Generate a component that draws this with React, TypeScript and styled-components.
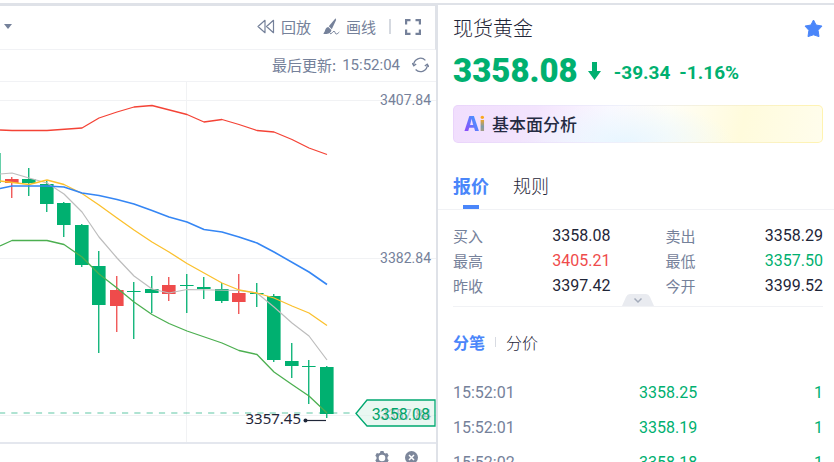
import React from "react";
import styled, { createGlobalStyle } from "styled-components";

const color = {
  green: "#00b070",
  red: "#ef4b4b",
  blue: "#4a86fa",
  ink: "#1f2638",
  muted: "#75819a",
  rule: "#f1f2f5",
  frame: "#dfe2e8",
};

const numberFont = `Roboto, "Noto Sans CJK SC", sans-serif`;
const textFont = `"Noto Sans CJK SC", sans-serif`;

const GlobalStyle = createGlobalStyle`
  * { box-sizing: border-box; }
  body { margin: 0; background: #fff; overflow: hidden; }
  button { border: 0; padding: 0; margin: 0; background: none; font: inherit; color: inherit; cursor: pointer; }
  svg { display: block; }
`;

const Page = styled.div`
  display: flex;
  height: 100vh;
  padding-top: 3px;
  font-family: ${textFont};
  color: ${color.ink};
`;

const ChartPanel = styled.main`
  flex: 1;
  min-width: 0;
  display: flex;
  flex-direction: column;
  border-top: 3px solid ${color.frame};
`;

const Toolbar = styled.div`
  height: 44px;
  flex: none;
  display: flex;
  align-items: center;
  padding: 0 14px 2px 4px;
  border-bottom: 1px solid ${color.rule};
  border-right: 1px solid ${color.frame};
  color: ${color.muted};
`;

const Spacer = styled.div`
  flex: 1;
`;

const ToolButton = styled.button<{ $gap?: number }>`
  display: flex;
  align-items: center;
  gap: 6px;
  margin-right: ${(p) => p.$gap ?? 0}px;
  font-size: 15px;
  line-height: 20px;
  font-weight: 400;
`;

const ToolDivider = styled.span`
  width: 2px;
  height: 15px;
  margin-right: 14px;
  background: #d5d9e0;
`;

const StatusRow = styled.div`
  height: 32px;
  flex: none;
  display: flex;
  align-items: center;
  justify-content: flex-end;
  padding: 0 7px 2px 0;
  border-bottom: 1px solid ${color.rule};
  font-size: 15px;
  line-height: 20px;
  font-weight: 400;
  color: ${color.muted};
`;

const StatusTime = styled.time`
  margin: 0 12px 0 6px;
  font-family: ${numberFont};
  font-size: 15px;
`;

const ChartArea = styled.div`
  height: 360px;
  flex: none;
`;

const IndicatorBar = styled.div`
  flex: 1;
  display: flex;
  justify-content: flex-end;
  align-items: flex-start;
  gap: 16px;
  padding: 7px 18px 0 0;
  border-top: 2px solid #e4e7ee;
  color: #7d879b;
`;

const QuotePanel = styled.aside`
  width: 398px;
  flex: none;
  border-top: 2px solid ${color.frame};
  border-left: 2px solid ${color.frame};
`;

const Header = styled.header`
  padding: 8px 11px 0 15px;
`;

const NameRow = styled.div`
  display: flex;
  align-items: center;
  justify-content: space-between;
  height: 30px;
`;

const Name = styled.h1`
  margin: 0;
  font-size: 20px;
  line-height: 30px;
  font-weight: 300;
`;

const PriceRow = styled.div`
  display: flex;
  align-items: center;
  height: 40px;
  margin-top: 8px;
  color: ${color.green};
  font-family: ${numberFont};
  font-weight: 700;
`;

const Price = styled.strong`
  font-size: 33px;
  line-height: 40px;
`;

const ArrowSlot = styled.span`
  margin: 0 13px 0 10px;
`;

const Change = styled.span`
  margin-right: 9px;
  padding-top: 3px;
  font-size: 19px;
  line-height: 24px;
`;

const AnalysisButton = styled.button`
  display: flex;
  align-items: center;
  width: 100%;
  height: 38px;
  margin-top: 14px;
  padding: 0 10px;
  border: 1px solid transparent;
  border-radius: 5px;
  background:
    radial-gradient(ellipse 110px 40px at 46% 100%, #e8f6ff, #e8f6ff00) padding-box,
    linear-gradient(100deg, #f1defd 0%, #f3e4fd 22%, #fbf9ff 42%, #fffef6 58%, #fffbdc 78%, #fffdec 100%) padding-box,
    linear-gradient(90deg, #ead4fb, #eef0fb 45%, #fff3b0) border-box;
`;

const AiMark = styled.span`
  display: flex;
  width: 28px;
  font-family: Inter, sans-serif;
  font-size: 20px;
  line-height: 24px;
  font-weight: 800;
`;

const MarkLetter = styled.span<{ $fill: string }>`
  background: ${(p) => p.$fill};
  background-clip: text;
  color: transparent;
`;

const AnalysisLabel = styled.span`
  font-size: 17px;
  line-height: 24px;
  font-weight: 500;
  color: #252b42;
`;

const Tabs = styled.div`
  display: flex;
  gap: 24px;
  height: 41px;
  margin-top: 26px;
  padding-left: 15px;
  border-bottom: 1px solid ${color.rule};
`;

const Tab = styled.button<{ $active?: boolean }>`
  display: flex;
  flex-direction: column;
  align-items: center;
  justify-content: space-between;
  font-size: 18px;
  line-height: 32px;
  font-weight: ${(p) => (p.$active ? 700 : 300)};
  color: ${(p) => (p.$active ? color.blue : color.ink)};
  &::after {
    content: "";
    width: 16px;
    height: 4px;
    background: ${(p) => (p.$active ? color.blue : "transparent")};
  }
`;

const Quotes = styled.dl`
  display: grid;
  grid-template-columns: 1fr 1fr;
  column-gap: 55px;
  margin: 0 11px 0 15px;
  padding: 13px 0 8px;
  border-bottom: 1px solid ${color.rule};
`;

const Quote = styled.div`
  display: flex;
  justify-content: space-between;
  line-height: 25px;
`;

const QuoteLabel = styled.dt`
  font-size: 15px;
  font-weight: 400;
  color: ${color.muted};
`;

const QuoteValue = styled.dd<{ $tone: string }>`
  margin: 0;
  font-family: ${numberFont};
  font-size: 16px;
  color: ${(p) => p.$tone};
`;

const CollapseButton = styled.button`
  display: block;
  height: 12px;
  margin: -13px auto 1px 184px;
  position: relative;
`;

const SubTabs = styled.div`
  display: flex;
  align-items: center;
  gap: 10px;
  height: 24px;
  margin: 24px 0 21px 15px;
`;

const SubTab = styled.button<{ $active?: boolean }>`
  font-size: 16px;
  line-height: 24px;
  font-weight: ${(p) => (p.$active ? 700 : 300)};
  color: ${(p) => (p.$active ? color.blue : color.ink)};
`;

const SubDivider = styled.span`
  width: 1px;
  height: 10px;
  background: #d8dbe2;
`;

const TickTable = styled.table`
  width: calc(100% - 26px);
  margin: 0 11px 0 15px;
  border-collapse: collapse;
  table-layout: fixed;
  font-family: ${numberFont};
  font-size: 16px;
`;

const TickCell = styled.td<{ $tone: string; $align: string }>`
  height: 35px;
  padding: 0;
  color: ${(p) => p.$tone};
  text-align: ${(p) => p.$align};
`;

const TickCol = styled.col<{ $share: number }>`
  width: ${(p) => p.$share}%;
`;

type Candle = [x: number, high: number, low: number, top: number, bottom: number, up?: boolean];

const candles: Candle[] = [
  [-6, 153, 183, 153, 183],
  [12, 177, 198, 179, 183, true],
  [29, 168, 196, 179, 183],
  [47, 181, 212, 184, 204],
  [64, 202, 237, 203, 225],
  [82, 224, 267, 225, 265],
  [99, 251, 353, 266, 305],
  [117, 276, 332, 290, 306, true],
  [134, 282, 339, 291, 292],
  [152, 276, 313, 289, 293],
  [169, 277, 301, 285, 294, true],
  [187, 274, 313, 285, 286],
  [204, 277, 299, 287, 289],
  [222, 283, 303, 289, 301],
  [239, 274, 314, 293, 302, true],
  [257, 283, 307, 293, 294],
  [274, 294, 362, 296, 360],
  [292, 343, 378, 361, 366],
  [309, 360, 404, 366, 367],
  [327, 366, 418, 367, 414],
];

const lines = [
  {
    stroke: "#bdbdbd",
    width: 1.2,
    points:
      "0,174 12,173 29,178 47,183 64,194 82,212 99,237 117,258 134,276 152,289 169,293 187,289.5 239,290.5 257,293 274,307 292,323 309,336 327,360",
  },
  {
    stroke: "#fbc02d",
    width: 1.3,
    points:
      "0,181 29,184.5 47,180 64,184.5 82,193.5 99,205 117,218 134,230 152,242 169,252 187,263.5 222,283 239,290 257,293 274,298 292,306 309,313 327,325.5",
  },
  {
    stroke: "#f44336",
    width: 1.3,
    points:
      "0,130 12,130.5 47,130.5 82,128 99,118 117,112 134,107 152,105.5 187,114.5 204,122 222,119.5 239,124.5 257,130.5 274,132 292,139.5 309,148 327,154.5",
  },
  {
    stroke: "#3586f4",
    width: 1.6,
    points:
      "0,188.5 12,186 47,186 64,187 82,193 99,195.5 117,199.5 134,204 152,210.5 169,217 187,222 204,229.5 222,232 239,237 257,243 274,252 309,272 327,284.5",
  },
  {
    stroke: "#4caf50",
    width: 1.3,
    points:
      "0,246 12,240.5 47,240.5 64,244.5 82,257 99,274 117,288 134,302 152,314.5 169,323.5 187,331 222,343 239,350.5 257,354.5 274,372 292,384.5 309,396 327,413",
  },
];

const AxisText = styled.text`
  font-family: ${numberFont};
  font-size: 14px;
  fill: ${color.muted};
  text-anchor: end;
`;

const LowText = styled.text`
  font-family: "Noto Sans", sans-serif;
  font-size: 15px;
  fill: ${color.ink};
  text-anchor: end;
`;

const TagText = styled.text`
  font-family: ${numberFont};
  font-size: 16px;
  fill: #00a468;
  text-anchor: end;
`;

const CandleChart = () => (
  <svg
    width="100%"
    height="360"
    viewBox="0 82 436 360"
    preserveAspectRatio="xMaxYMid slice"
    role="img"
    aria-label="现货黄金 K线图"
  >
    <path d="M0 100.5H436M0 258.5H436M0 415.5H436M186.5 82V442" stroke="#f1f2f4" fill="none" />
    {candles.map(([x, high, low, top, bottom, up]) => {
      const fill = up ? color.red : color.green;
      return (
        <g key={x} fill={fill}>
          <rect x={x - 0.9} y={high} width={1.3} height={low - high} />
          <rect x={x - 7} y={top} width={13.6} height={bottom - top} />
        </g>
      );
    })}
    {lines.map((l) => (
      <polyline key={l.stroke} points={l.points} fill="none" stroke={l.stroke} strokeWidth={l.width} strokeLinejoin="round" />
    ))}
    <path d="M-1 413H356" stroke="#00a870" strokeOpacity=".42" strokeWidth="1.6" strokeDasharray="6.2 6.1" />
    <LowText x="301" y="424">3357.45</LowText>
    <circle cx="305.5" cy="420.5" r="2" fill={color.ink} />
    <path d="M305 420.5H326" stroke={color.ink} strokeWidth="1.2" />
    <AxisText x="431" y="105">3407.84</AxisText>
    <AxisText x="431" y="263">3382.84</AxisText>
    <AxisText x="431" y="420">3357.84</AxisText>
    <path d="M356 413.5L367 400H435V426H367Z" fill="#d8f3e8" fillOpacity=".55" stroke="#00a870" strokeWidth="1.3" />
    <TagText x="430" y="420">3358.08</TagText>
  </svg>
);

const RewindIcon = () => (
  <svg width="18" height="15" viewBox="0 0 18 15" fill="none" stroke="currentColor" strokeWidth="1.2" strokeLinejoin="round">
    <path d="M8 1.3V13.7L1 7.5ZM16.5 1.3V13.7L9.5 7.5Z" />
  </svg>
);

const BrushIcon = () => (
  <svg width="17" height="17" viewBox="0 0 17 17" fill="none">
    <path d="M12.6.2L5.8 8.300 8.800 11.200 13.100 2Z" fill="currentColor" />
    <path d="M5.300 9C3 9.300 2.400 11.500 1.800 13.200L.3 15.800C3.500 16.500 7.900 15.800 8.400 12Z" fill="currentColor" />
    <path d="M7 15.700C9 16.200 9.500 13.400 11 13.300S11.800 16 13.200 16 15.400 14.700 16.300 14" stroke="currentColor" strokeWidth="1" />
  </svg>
);

const FullscreenIcon = () => (
  <svg width="16" height="16" viewBox="0 0 16 16" fill="none" stroke="currentColor" strokeWidth="2.2">
    <path d="M1.100 5.500V1.100H5.500M10.500 1.100H14.900V5.500M14.900 10.500V14.900H10.500M5.500 14.900H1.100V10.500" />
  </svg>
);

const RefreshIcon = () => (
  <svg width="17" height="16" viewBox="0 0 17 16" fill="none" stroke="currentColor" strokeWidth="1.3">
    <path d="M1.700 8.400A6.800 6.800 0 0 1 13.400 3.400M15.300 7.400A6.800 6.800 0 0 1 3.600 12.500" />
    <path d="M.2 6.200L1.800 8.800 4.200 7M16.800 9.800L15.200 7.100 12.800 8.900" />
  </svg>
);

const GearIcon = () => (
  <svg width="14" height="14" viewBox="0 0 14 14">
    <path
      fill="currentColor"
      fillRule="evenodd"
      d="M5.500 0H8.500L9 1.800 10.400 2.600 12.200 2.100 13.700 4.700 12.500 6V8L13.700 9.300 12.200 11.900 10.400 11.400 9 12.200 8.500 14H5.500L5 12.200 3.600 11.400 1.800 11.900.3 9.300 1.500 8V6L.3 4.700 1.800 2.100 3.600 2.600 5 1.800ZM7 3.700A3.300 3.300 0 1 0 7 10.300 3.300 3.300 0 0 0 7 3.700Z"
    />
  </svg>
);

const CloseIcon = () => (
  <svg width="13" height="13" viewBox="0 0 13 13">
    <circle cx="6.5" cy="6.5" r="6.5" fill="currentColor" />
    <path d="M4 4L9 9M9 4L4 9" stroke="#fff" strokeWidth="1.5" />
  </svg>
);

const StarIcon = () => (
  <svg width="19" height="19" viewBox="0 0 19 19">
    <path
      d="M9.500 1L12.100 6 18 7.100 14.100 11.300 15 17.600 9.500 15.800 4 17.600 4.900 11.300 1 7.100 6.900 6Z"
      fill={color.blue}
      stroke={color.blue}
      strokeLinejoin="round"
    />
  </svg>
);

const quotes: [string, string, string][] = [
  ["买入", "3358.08", color.ink],
  ["卖出", "3358.29", color.ink],
  ["最高", "3405.21", color.red],
  ["最低", "3357.50", color.green],
  ["昨收", "3397.42", color.ink],
  ["今开", "3399.52", color.ink],
];

const ticks: [string, string, string][] = [
  ["15:52:01", "3358.25", "1"],
  ["15:52:01", "3358.19", "1"],
  ["15:52:02", "3358.18", "1"],
];

export default function App() {
  return (
    <Page>
      <GlobalStyle />
      <ChartPanel>
        <Toolbar>
          <ToolButton aria-label="更多周期">
            <svg width="8" height="5" viewBox="0 0 8 5">
              <path d="M0 0H8L4 5Z" fill="currentColor" />
            </svg>
          </ToolButton>
          <Spacer />
          <ToolButton $gap={12}>
            <RewindIcon />
            回放
          </ToolButton>
          <ToolButton $gap={13}>
            <BrushIcon />
            画线
          </ToolButton>
          <ToolDivider />
          <ToolButton aria-label="全屏">
            <FullscreenIcon />
          </ToolButton>
        </Toolbar>
        <StatusRow>
          最后更新:
          <StatusTime>15:52:04</StatusTime>
          <ToolButton aria-label="刷新">
            <RefreshIcon />
          </ToolButton>
        </StatusRow>
        <ChartArea>
          <CandleChart />
        </ChartArea>
        <IndicatorBar>
          <ToolButton aria-label="指标设置">
            <GearIcon />
          </ToolButton>
          <ToolButton aria-label="关闭指标">
            <CloseIcon />
          </ToolButton>
        </IndicatorBar>
      </ChartPanel>

      <QuotePanel>
        <Header>
          <NameRow>
            <Name>现货黄金</Name>
            <button aria-label="自选">
              <StarIcon />
            </button>
          </NameRow>
          <PriceRow>
            <Price>3358.08</Price>
            <ArrowSlot>
              <svg width="13" height="18" viewBox="0 0 13 18">
                <path d="M4 0H9V9H13L6.5 18 0 9H4Z" fill={color.green} />
              </svg>
            </ArrowSlot>
            <Change>-39.34</Change>
            <Change>-1.16%</Change>
          </PriceRow>
          <AnalysisButton>
            <AiMark>
              <MarkLetter $fill="linear-gradient(60deg, #8a50fa 20%, #4d8dff 70%)">A</MarkLetter>
              <MarkLetter $fill="linear-gradient(180deg, #f9a61e 30%, #7f9aa8 60%, #c9a05c)">i</MarkLetter>
            </AiMark>
            <AnalysisLabel>基本面分析</AnalysisLabel>
          </AnalysisButton>
        </Header>

        <Tabs role="tablist">
          <Tab role="tab" aria-selected="true" $active>
            报价
          </Tab>
          <Tab role="tab" aria-selected="false">
            规则
          </Tab>
        </Tabs>

        <Quotes>
          {quotes.map(([label, value, tone]) => (
            <Quote key={label}>
              <QuoteLabel>{label}</QuoteLabel>
              <QuoteValue $tone={tone}>{value}</QuoteValue>
            </Quote>
          ))}
        </Quotes>
        <CollapseButton aria-label="展开">
          <svg width="32" height="12" viewBox="0 0 32 12">
            <path d="M0 12L4 3Q5.300 0 8 0H24Q26.700 0 28 3L32 12Z" fill="#e9ebf0" />
            <path d="M12.500 4.500L16 8L19.500 4.500" fill="none" stroke="#a3abba" strokeWidth="1.5" />
          </svg>
        </CollapseButton>

        <SubTabs role="tablist">
          <SubTab role="tab" aria-selected="true" $active>
            分笔
          </SubTab>
          <SubDivider />
          <SubTab role="tab" aria-selected="false">
            分价
          </SubTab>
        </SubTabs>

        <TickTable>
          <colgroup>
            <TickCol $share={33} />
            <TickCol $share={33} />
            <TickCol $share={34} />
          </colgroup>
          <tbody>
            {ticks.map(([time, price, volume]) => (
              <tr key={time + price}>
                <TickCell $tone={color.muted} $align="left">
                  {time}
                </TickCell>
                <TickCell $tone={color.green} $align="right">
                  {price}
                </TickCell>
                <TickCell $tone={color.green} $align="right">
                  {volume}
                </TickCell>
              </tr>
            ))}
          </tbody>
        </TickTable>
      </QuotePanel>
    </Page>
  );
}
